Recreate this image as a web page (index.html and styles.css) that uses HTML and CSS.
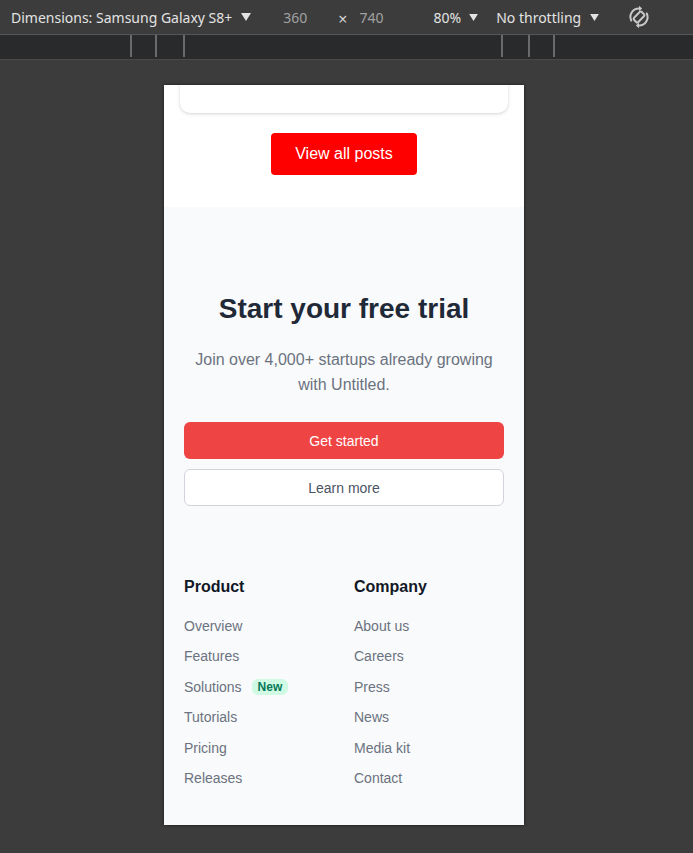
FILE: index.html
```html
<!DOCTYPE html>
<html>
<head>
<meta charset="utf-8">
<link rel="stylesheet" href="styles.css">
</head>
<body>
<div class="toolbar">
  <span class="tb-label">Dimensions: Samsung Galaxy S8+</span>
  <svg class="tb-caret c1" width="10" height="8" viewBox="0 0 10 8"><path d="M0 0 H10 L5 8 Z" fill="#e3e3e3"/></svg>
  <span class="tb-num tb-w">360</span>
  <span class="tb-x">&#215;</span>
  <span class="tb-num tb-h">740</span>
  <span class="tb-label tb-zoom">80%</span>
  <svg class="tb-caret c2" width="9" height="7" viewBox="0 0 10 8"><path d="M0 0 H10 L5 8 Z" fill="#e3e3e3"/></svg>
  <span class="tb-label tb-throttle">No throttling</span>
  <svg class="tb-caret c3" width="9" height="7" viewBox="0 0 10 8"><path d="M0 0 H10 L5 8 Z" fill="#e3e3e3"/></svg>
  <svg class="tb-rotate" width="24" height="24" viewBox="0 0 24 24">
    <g fill="none" stroke="#c8c8c8" stroke-width="2" stroke-linecap="round">
      <path d="M4.2 15.5 A8.5 8.5 0 0 1 12.5 3.5"/>
      <path d="M19.8 8.5 A8.5 8.5 0 0 1 11.5 20.5"/>
      <rect x="9" y="6.5" width="6" height="11" rx="1.5" transform="rotate(45 12 12)"/>
    </g>
    <path d="M12 0.8 L15.2 3.6 L12 6.3 Z" fill="#c8c8c8"/>
    <path d="M12 23.2 L8.8 20.4 L12 17.7 Z" fill="#c8c8c8"/>
  </svg>
</div>
<div class="ruler">
  <i class="tick t1"></i><i class="tick t2"></i><i class="tick t3"></i>
  <i class="tick t4"></i><i class="tick t5"></i><i class="tick t6"></i>
</div>
<div class="stage">
  <div class="device">
    <section class="posts">
      <div class="card"></div>
      <a class="btn-posts">View all posts</a>
    </section>
    <section class="cta">
      <h2 class="cta-title">Start your free trial</h2>
      <p class="cta-text">Join over 4,000+ startups already growing with Untitled.</p>
      <a class="btn btn-primary">Get started</a>
      <a class="btn btn-secondary">Learn more</a>
      <div class="footer-cols">
        <div class="col">
          <h3 class="col-title">Product</h3>
          <ul class="links">
            <li>Overview</li>
            <li>Features</li>
            <li>Solutions <span class="badge">New</span></li>
            <li>Tutorials</li>
            <li>Pricing</li>
            <li>Releases</li>
          </ul>
        </div>
        <div class="col">
          <h3 class="col-title">Company</h3>
          <ul class="links">
            <li>About us</li>
            <li>Careers</li>
            <li>Press</li>
            <li>News</li>
            <li>Media kit</li>
            <li>Contact</li>
          </ul>
        </div>
      </div>
    </section>
  </div>
</div>
</body>
</html>
```
FILE: styles.css
```css
* { box-sizing: border-box; }
html, body { margin: 0; padding: 0; }
body {
  background: #3c3c3c;
  width: 693px;
  height: 853px;
  overflow: hidden;
  font-family: "Liberation Sans", Arial, sans-serif;
}
.toolbar {
  height: 35px;
  border-bottom: 1px solid #575757;
  background: #3c3c3c;
  display: flex;
  align-items: center;
  padding-left: 11px;
  font-family: "Noto Sans", "Open Sans", sans-serif;
  font-size: 14px;
  color: #e3e3e3;
}
.tb-label { white-space: nowrap; }
.tb-caret { flex-shrink: 0; }
.c1 { margin-left: 9px; }
.c2 { margin-left: 8px; }
.c3 { margin-left: 9px; }
.tb-num { color: #a2a2a2; }
.tb-w { margin-left: 32px; }
.tb-x { margin-left: 31px; color: #d0d0d0; font-size: 16px; position: relative; top: 2px; }
.tb-h { margin-left: 12px; }
.tb-zoom { margin-left: 50px; }
.tb-throttle { margin-left: 18px; }
.tb-rotate { margin-left: 28px; }
.ruler {
  height: 25px;
  background: #292a2c;
  border-bottom: 1px solid #4a4a4a;
  display: flex;
  align-items: flex-start;
}
.tick { display: block; width: 2px; height: 22px; background: #6a6a6a; }
.t1 { margin-left: 130px; }
.t2 { margin-left: 23px; }
.t3 { margin-left: 26px; }
.t4 { margin-left: 316px; }
.t5 { margin-left: 25px; }
.t6 { margin-left: 23px; }
.stage {
  padding-top: 25px;
  padding-left: 164px;
}
.device {
  width: 360px;
  height: 740px;
  overflow: hidden;
  background: #fff;
  box-shadow: 0 0 3px rgba(0,0,0,0.6);
  display: flex;
  flex-direction: column;
}
.posts {
  background: #fff;
  display: flex;
  flex-direction: column;
  align-items: center;
  padding-bottom: 32px;
  flex-shrink: 0;
}
.card {
  width: 328px;
  height: 128px;
  margin-top: -100px;
  background: #fff;
  border-radius: 10px;
  box-shadow: 0 1px 4px rgba(0,0,0,0.12), 0 1px 2px rgba(0,0,0,0.06);
}
.btn-posts {
  margin-top: 20px;
  width: 146px;
  height: 42px;
  background: #ff0000;
  color: #fff;
  border-radius: 4px;
  font-size: 16px;
  display: flex;
  align-items: center;
  justify-content: center;
}
.cta {
  flex: 1;
  background: #f9fafb;
  padding: 84px 20px 0;
  display: flex;
  flex-direction: column;
}
.cta-title {
  margin: 0;
  font-size: 28px;
  line-height: 36px;
  font-weight: 700;
  color: #1f2937;
  text-align: center;
}
.cta-text {
  margin: 20px 0 0;
  font-size: 16px;
  line-height: 25px;
  color: #6b7280;
  text-align: center;
}
.btn {
  height: 37px;
  border-radius: 6px;
  display: flex;
  align-items: center;
  justify-content: center;
  font-size: 14px;
}
.btn-primary {
  margin-top: 25px;
  background: #ef4444;
  color: #fff;
}
.btn-secondary {
  margin-top: 10px;
  background: #fff;
  border: 1px solid #d1d5db;
  color: #4b5563;
}
.footer-cols {
  margin-top: 69px;
  display: grid;
  grid-template-columns: 1fr 1fr;
  column-gap: 20px;
}
.col-title {
  margin: 0;
  font-size: 16px;
  line-height: 24px;
  font-weight: 700;
  color: #111827;
}
.links {
  list-style: none;
  margin: 17px 0 0;
  padding: 0;
  display: flex;
  flex-direction: column;
  gap: 10.4px;
}
.links li {
  font-size: 14px;
  line-height: 20px;
  color: #6b7280;
  display: flex;
  align-items: center;
}
.badge {
  margin-left: 10px;
  background: #d1fae5;
  color: #047857;
  font-size: 12px;
  font-weight: 700;
  line-height: 16px;
  padding: 0 6px;
  border-radius: 6px;
}
```
